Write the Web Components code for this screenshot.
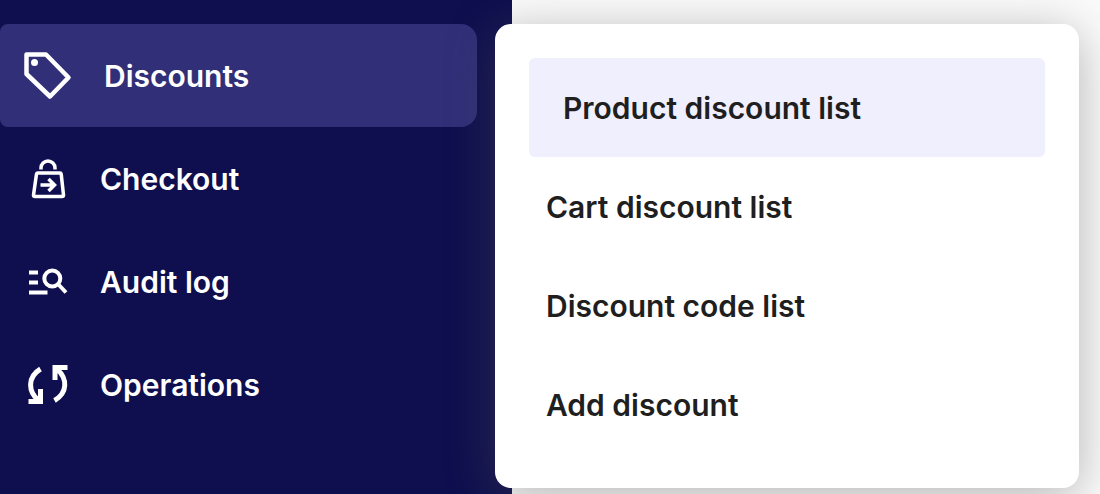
<!DOCTYPE html>
<html lang="en">
<head>
<meta charset="utf-8">
<meta name="viewport" content="width=device-width, initial-scale=1">
<title>Discounts</title>
<style>
  body {
    margin: 0;
    background: #fbfbfb;
    font-family: Inter, "Liberation Sans", sans-serif;
    font-size: 30px;
    line-height: 36px;
  }
</style>
</head>
<body>
<app-shell>
  <side-nav slot="nav">
    <nav-item active icon="tag">Discounts</nav-item>
    <nav-item icon="lock">Checkout</nav-item>
    <nav-item icon="log">Audit log</nav-item>
    <nav-item icon="sync">Operations</nav-item>
  </side-nav>
  <sub-menu>
    <sub-menu-item active>Product discount list</sub-menu-item>
    <sub-menu-item>Cart discount list</sub-menu-item>
    <sub-menu-item>Discount code list</sub-menu-item>
    <sub-menu-item>Add discount</sub-menu-item>
  </sub-menu>
</app-shell>

<script>
const icons = {
  tag: `<svg viewBox="0 0 48 48" width="48" height="48" stroke-width="4.500" stroke-linejoin="round">
    <path d="M2.500 2.500H22L44.500 25.500L26 44.500L2.500 22Z"/>
    <circle cx="10.500" cy="10.500" r="3.500" fill="currentColor" stroke="none"/>
  </svg>`,
  lock: `<svg viewBox="0 0 40 40" width="40" height="40" stroke-width="3.500" stroke-linejoin="round">
    <path d="M10 14H32Q33 14 33.200 15L35.500 36Q35.500 37.500 34 37.500H7Q5.500 37.500 5.500 36L8.500 15Q8.700 14 10 14Z"/>
    <path d="M13 10.500V9A7 7 0 0 1 27 9V10.500"/>
    <path d="M12.500 26H26M20.500 20L26.500 26L20.500 32" stroke-linejoin="miter"/>
  </svg>`,
  log: `<svg viewBox="0 0 40 40" width="40" height="40" stroke-width="4">
    <path d="M1 10.500H10M1 20.500H10M1 30.500H19.500M30 22L38 30.500"/>
    <circle cx="24.300" cy="16.500" r="8"/>
  </svg>`,
  sync: `<svg viewBox="0 0 40 40" width="40" height="40" stroke-width="5">
    <path d="M12.500 4C-.5 12 0 26 10 35M.5 36.500H12.500V24"/>
    <path d="M26.500 35.500C39.500 28 40 14 29 4M39.500 2.500H27V15"/>
  </svg>`
};

class AppShell extends HTMLElement {
  connectedCallback() {
    const shadow = this.attachShadow({ mode: "open" });
    shadow.innerHTML = `
    <style>
      :host {
        display: grid;
        grid-template-columns: minmax(320px, 512px) minmax(0, 1fr);
        min-height: 100vh;
      }
      main {
        /* the flyout overlaps the edge of the sidebar */
        margin-left: -17px;
        padding: 24px 21px 6px 0;
      }
    </style>
    <slot name="nav"></slot>
    <main><slot></slot></main>`;
  }
}

class SideNav extends HTMLElement {
  connectedCallback() {
    const shadow = this.attachShadow({ mode: "open" });
    shadow.innerHTML = `
    <style>
      :host {
        display: block;
        background: #0f0f4f;
        color: #fff;
      }
      nav {
        display: flex;
        flex-direction: column;
        padding: 24px 35px 0 0;
      }
    </style>
    <nav aria-label="Main"><slot></slot></nav>`;
  }
}

class NavItem extends HTMLElement {
  connectedCallback() {
    const shadow = this.attachShadow({ mode: "open" });
    shadow.innerHTML = `
    <style>
      :host {
        display: block;
      }
      a {
        display: flex;
        align-items: center;
        gap: 32px;
        min-height: 103px;
        padding-left: 28px;
        color: inherit;
        font-weight: 600;
        text-decoration: none;
      }
      :host([active]) a {
        padding-left: 24px;
        border-radius: 16px;
        border-top-left-radius: 8px;
        border-bottom-left-radius: 8px;
        background: #302f78;
      }
      svg {
        flex: none;
        fill: none;
        stroke: currentColor;
      }
    </style>
    <a href="#">${icons[this.getAttribute("icon")]}<span><slot></slot></span></a>`;
  }
}

class SubMenu extends HTMLElement {
  connectedCallback() {
    const shadow = this.attachShadow({ mode: "open" });
    shadow.innerHTML = `
    <style>
      :host {
        display: block;
        padding: 34px;
        border-radius: 16px;
        background: #fff;
        box-shadow: 0 8px 48px rgba(80, 80, 80, 0.42);
      }
    </style>
    <nav aria-label="Discounts"><slot></slot></nav>`;
  }
}

class SubMenuItem extends HTMLElement {
  connectedCallback() {
    const shadow = this.attachShadow({ mode: "open" });
    shadow.innerHTML = `
    <style>
      :host {
        display: block;
      }
      a {
        display: flex;
        align-items: center;
        min-height: 99px;
        padding-left: 17px;
        color: #1f1f1f;
        font-weight: 600;
        text-decoration: none;
      }
      :host([active]) a {
        padding-left: 34px;
        border-radius: 6px;
        background: #f0effd;
      }
    </style>
    <a href="#"><slot></slot></a>`;
  }
}

customElements.define("app-shell", AppShell);
customElements.define("side-nav", SideNav);
customElements.define("nav-item", NavItem);
customElements.define("sub-menu", SubMenu);
customElements.define("sub-menu-item", SubMenuItem);
</script>
</body>
</html>
